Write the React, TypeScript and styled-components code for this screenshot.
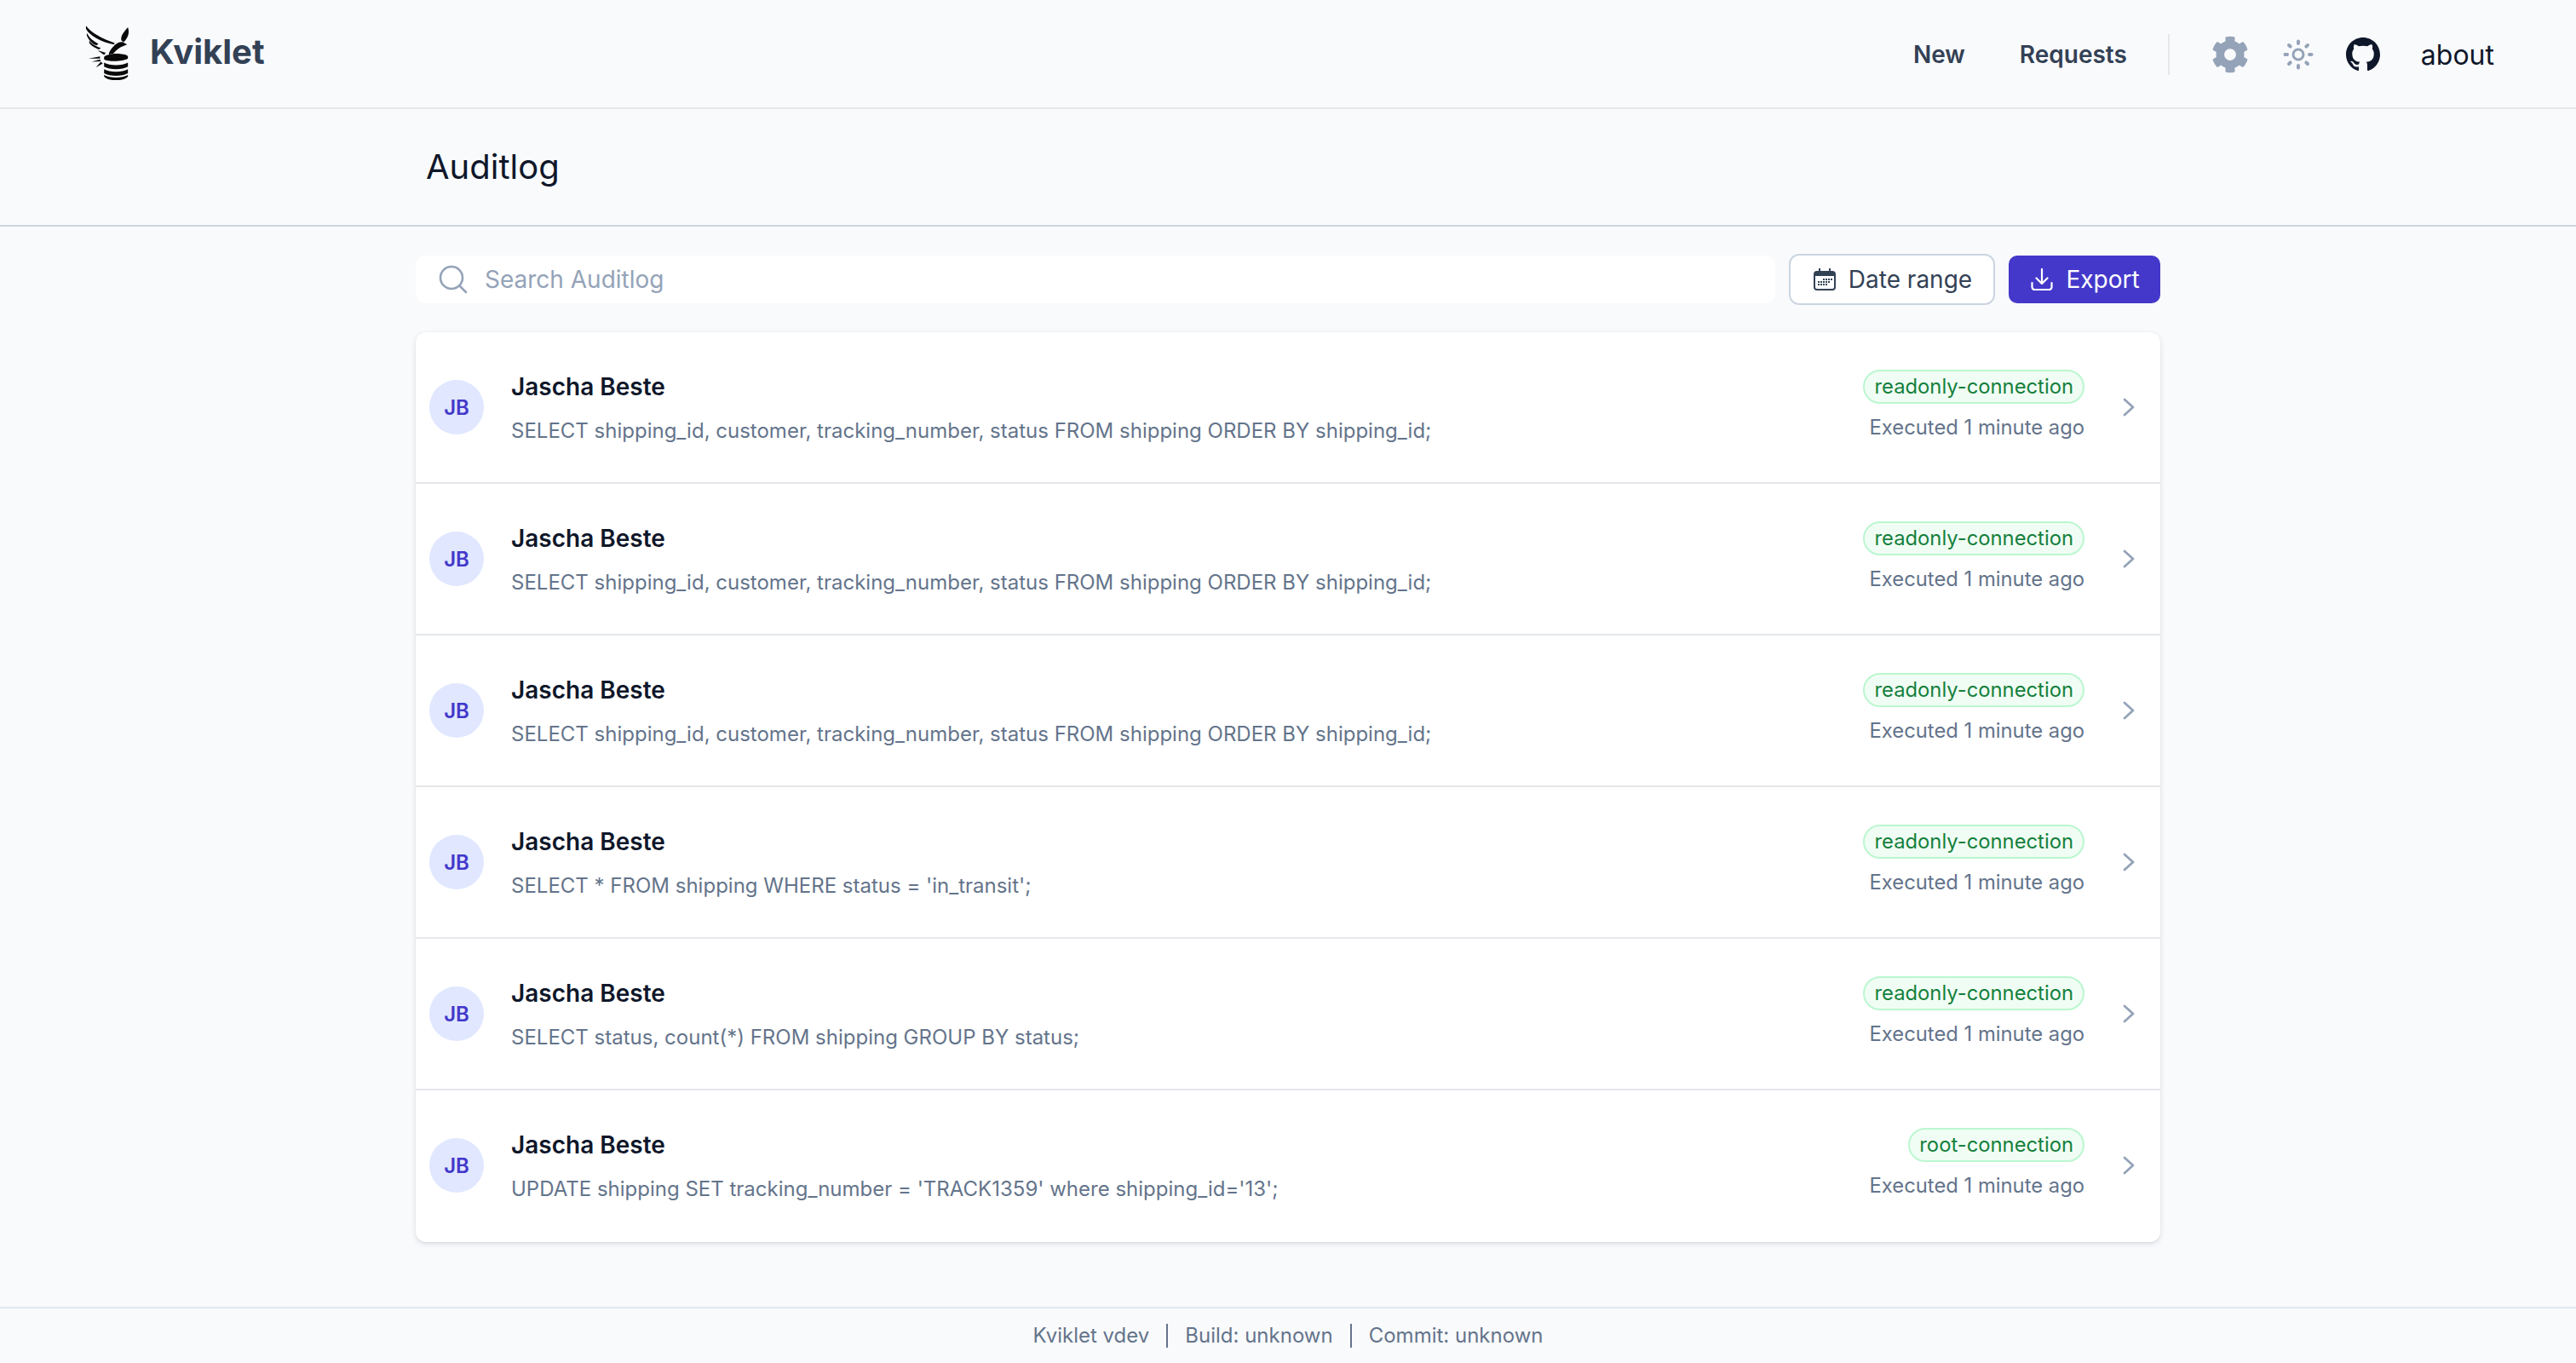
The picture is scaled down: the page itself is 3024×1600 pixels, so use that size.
import React from "react";
import styled, { createGlobalStyle } from "styled-components";
import { FaCog } from "react-icons/fa";
import { BsGithub } from "react-icons/bs";

const Global = createGlobalStyle`
  html, body { margin: 0; padding: 0; background: #f9fafc; }
  body { font-family: Inter, "Noto Sans", sans-serif; color: #0f172a; }
  * { box-sizing: border-box; }
`;

const Page = styled.div`
  min-height: 1600px;
  display: flex;
  flex-direction: column;
`;

const Header = styled.header`
  height: 128px;
  flex: none;
  display: flex;
  align-items: center;
  justify-content: space-between;
  padding: 0 96px 0 100px;
  border-bottom: 2px solid #e5e7eb;
`;

const Brand = styled.div`
  display: flex;
  align-items: center;
  gap: 22px;
  margin-top: -4px;
`;

const BrandName = styled.span`
  font-size: 40px;
  font-weight: 700;
  color: #334155;
  line-height: 48px;
`;

const Nav = styled.nav`
  display: flex;
  align-items: center;
  padding-top: 2px;
`;

const NavLink = styled.a`
  font-size: 28px;
  font-weight: 600;
  color: #334155;
  line-height: 40px;
  margin-right: 64px;
`;

const NavRule = styled.div`
  width: 2px;
  height: 48px;
  background: #e5e7eb;
  margin: 0 49px 0 -16px;
`;

const GearWrap = styled.span`
  display: flex;
  color: #94a3b8;
  margin-right: 40px;
`;

const SunWrap = styled.span`
  display: flex;
  color: #94a3b8;
  margin-right: 38px;
`;

const GithubWrap = styled.span`
  display: flex;
  color: #0f172a;
  margin-right: 48px;
`;

const About = styled.a`
  font-size: 32px;
  color: #0f172a;
  line-height: 40px;
  position: relative;
  top: 1px;
`;

const TitleBar = styled.div`
  height: 138px;
  flex: none;
  border-bottom: 2px solid #cbd5e1;
  display: flex;
  align-items: center;
  padding-left: 500px;
`;

const Title = styled.h1`
  margin: 0;
  font-size: 40px;
  font-weight: 400;
  line-height: 56px;
  color: #0f172a;
`;

const Main = styled.main`
  width: 2048px;
  margin: 0 auto;
  flex: 1;
  padding-top: 34px;
`;

const Toolbar = styled.div`
  display: flex;
  align-items: center;
  height: 56px;
  margin-bottom: 34px;
`;

const Search = styled.div`
  flex: 1;
  height: 56px;
  background: #fff;
  border-radius: 12px;
  display: flex;
  align-items: center;
  padding-left: 27px;
  gap: 20px;
  color: #94a3b8;
  font-size: 28px;
  margin-right: 16px;
`;

const DateButton = styled.button`
  width: 242px;
  height: 60px;
  flex: none;
  margin-right: 16px;
  background: #fff;
  border: 2px solid #cbd5e1;
  border-radius: 12px;
  display: flex;
  align-items: center;
  justify-content: center;
  gap: 15px;
  font: 400 28px Inter, sans-serif;
  color: #334155;
  padding: 0 0 0 2px;
`;

const ExportButton = styled.button`
  width: 178px;
  height: 56px;
  flex: none;
  background: #4338ca;
  border: 0;
  border-radius: 10px;
  display: flex;
  align-items: center;
  justify-content: center;
  gap: 15px;
  font: 400 28px Inter, sans-serif;
  color: #fff;
  padding: 0 0 0 2px;
`;

const List = styled.section`
  background: #fff;
  border-radius: 12px;
  box-shadow: 0 2px 6px rgba(15, 23, 42, 0.12), 0 1px 2px rgba(15, 23, 42, 0.06);
  overflow: hidden;
`;

const Row = styled.article`
  height: 178px;
  display: flex;
  align-items: center;
  padding: 0 30px 0 16px;
  border-bottom: 2px solid #e5e7eb;
  &:last-child { border-bottom: 0; padding-bottom: 2px; }
`;

const Avatar = styled.div`
  width: 64px;
  height: 64px;
  flex: none;
  border-radius: 50%;
  background: #e0e7ff;
  color: #4338ca;
  font-size: 24px;
  font-weight: 600;
  display: flex;
  align-items: center;
  justify-content: center;
  margin-right: 32px;
`;

const Body = styled.div`
  flex: 1;
  min-width: 0;
  padding-top: 4px;
`;

const Name = styled.div`
  font-size: 28px;
  font-weight: 600;
  line-height: 40px;
  color: #0f172a;
  margin-bottom: 12px;
`;

const Query = styled.div`
  font-size: 24px;
  line-height: 40px;
  color: #64748b;
  white-space: nowrap;
`;

const Meta = styled.div`
  display: flex;
  flex-direction: column;
  align-items: flex-end;
  gap: 8px;
  margin-right: 45px;
`;

const Badge = styled.span`
  height: 40px;
  padding: 0 11px;
  border-radius: 20px;
  background: #f0fdf4;
  border: 2px solid #bbf7d0;
  color: #15803d;
  font-size: 23.8px;
  line-height: 35px;
  white-space: nowrap;
`;

const Executed = styled.div`
  font-size: 23.8px;
  line-height: 40px;
  color: #64748b;
  white-space: nowrap;
`;

const Footer = styled.footer`
  height: 66px;
  flex: none;
  border-top: 2px solid #e2e8f0;
  display: flex;
  align-items: center;
  justify-content: center;
  font-size: 24px;
  color: #64748b;
`;

const FooterItem = styled.span`
  padding: 0 20px;
  line-height: 28px;
  border-left: 2px solid #64748b;
  &:first-child { border-left: 0; }
`;

const Logo = () => (
  <svg width="54" height="66" viewBox="20 10 56 68" fill="#0a0a0a">
    <path d="M21 12 C28 21 41 28 56 33 L55 35 C40 32 26 25 21 16 Z" />
    <path d="M22 21 C26 28 30 31 36 34 L34 36 C28 34 24 29 22 24 Z" />
    <path d="M25 30 C28 34 32 37 39 39 L37 41 C32 39 27 36 25 33 Z" />
    <path d="M35 42 L45 45 L43 47.500 Z" />
    <path d="M24 52 L38 49.500 L38 52 Z" />
    <path d="M28 56 L38 53 L39 55.500 Z" />
    <path d="M33 63 L39 56 L41.500 58 Z" />
    <path d="M64 30 C63 24 67 20 72 14 C74 20 73 26 67 32 Z" />
    <path d="M49 45 C54 36 60 31 66 32 L71 35 L66 37 C62 38 58 42 54 46 L58 45 L49 47 Z" />
    <path d="M43 50 C48 45 67 45 72 49 L72 52 C66 56 48 56 43 53 Z" />
    <path d="M43 57 C50 61 65 61 72 57 L72 62 C65 66 50 66 43 62 Z" />
    <path d="M43 65 C50 69 65 69 72 65 L72 70 C65 74 50 74 43 70 Z" />
    <path d="M43 72 C50 76 65 76 72 72 L72 74 C66 80 49 80 43 74 Z" />
  </svg>
);

const Sun = () => (
  <svg width="36" height="36" viewBox="0 0 36 36" fill="none" stroke="currentColor" strokeLinecap="round">
    <circle cx="18" cy="18" r="6" strokeWidth="3" />
    <path
      strokeWidth="4"
      d="M18 2.500v2.500M18 31v2.500M2.500 18h2.500M31 18h2.500M7 7l1.700 1.700M27.300 27.300L29 29M7 29l1.700-1.700M27.300 8.700L29 7"
    />
  </svg>
);

const SearchIcon = () => (
  <svg width="34" height="34" viewBox="0 0 34 34" fill="none" stroke="currentColor" strokeWidth="2.600" strokeLinecap="round">
    <circle cx="15" cy="15" r="13" />
    <path d="M24.500 24.500L32 32" />
  </svg>
);

const CalendarIcon = () => (
  <svg width="26" height="26" viewBox="0 0 26 26" fill="#334155">
    <path d="M6 0h2v3h10V0h2v3h2a4 4 0 0 1 4 4v15a4 4 0 0 1-4 4H4a4 4 0 0 1-4-4V7a4 4 0 0 1 4-4h2zM2 9v13a2 2 0 0 0 2 2h18a2 2 0 0 0 2-2V9z" />
    <path d="M5 15h2v2H5zM5 18h2v2H5zM8 15h2v2H8zM8 18h2v2H8zM11 15h2v2h-2zM11 18h2v2h-2zM14 12h2v2h-2zM14 15h2v2h-2zM14 18h2v2h-2zM17 12h2v2h-2zM17 15h2v2h-2zM20 12h2v2h-2zM11 12h2v2h-2z" />
  </svg>
);

const DownloadIcon = () => (
  <svg width="26" height="26" viewBox="0 0 26 26" fill="none" stroke="#fff" strokeWidth="2.200" strokeLinecap="round" strokeLinejoin="round">
    <path d="M13 1v17M6.500 11.500L13 18l6.500-6.500" />
    <path d="M1.500 17v5a3 3 0 0 0 3 3h17a3 3 0 0 0 3-3v-5" />
  </svg>
);

const Chevron = () => (
  <svg width="14" height="22" viewBox="0 0 14 22" fill="none" stroke="#94a3b8" strokeWidth="2.800" strokeLinecap="round" strokeLinejoin="round">
    <path d="M2 2l10 9-10 9" />
  </svg>
);

const SHIPPING = "SELECT shipping_id, customer, tracking_number, status FROM shipping ORDER BY shipping_id;";

const rows = [
  { query: SHIPPING, connection: "readonly-connection" },
  { query: SHIPPING, connection: "readonly-connection" },
  { query: SHIPPING, connection: "readonly-connection" },
  { query: "SELECT * FROM shipping WHERE status = 'in_transit';", connection: "readonly-connection" },
  { query: "SELECT status, count(*) FROM shipping GROUP BY status;", connection: "readonly-connection" },
  { query: "UPDATE shipping SET tracking_number = 'TRACK1359' where shipping_id='13';", connection: "root-connection" },
];

export default function App() {
  return (
    <Page>
      <Global />
      <Header>
        <Brand>
          <Logo />
          <BrandName>Kviklet</BrandName>
        </Brand>
        <Nav>
          <NavLink>New</NavLink>
          <NavLink>Requests</NavLink>
          <NavRule />
          <GearWrap><FaCog size={44} /></GearWrap>
          <SunWrap><Sun /></SunWrap>
          <GithubWrap><BsGithub size={40} /></GithubWrap>
          <About>about</About>
        </Nav>
      </Header>
      <TitleBar>
        <Title>Auditlog</Title>
      </TitleBar>
      <Main>
        <Toolbar>
          <Search>
            <SearchIcon />
            <span>Search Auditlog</span>
          </Search>
          <DateButton><CalendarIcon />Date range</DateButton>
          <ExportButton><DownloadIcon />Export</ExportButton>
        </Toolbar>
        <List>
          {rows.map((row, index) => (
            <Row key={index}>
              <Avatar>JB</Avatar>
              <Body>
                <Name>Jascha Beste</Name>
                <Query>{row.query}</Query>
              </Body>
              <Meta>
                <Badge>{row.connection}</Badge>
                <Executed>Executed 1 minute ago</Executed>
              </Meta>
              <Chevron />
            </Row>
          ))}
        </List>
      </Main>
      <Footer>
        <FooterItem>Kviklet vdev</FooterItem>
        <FooterItem>Build: unknown</FooterItem>
        <FooterItem>Commit: unknown</FooterItem>
      </Footer>
    </Page>
  );
}
